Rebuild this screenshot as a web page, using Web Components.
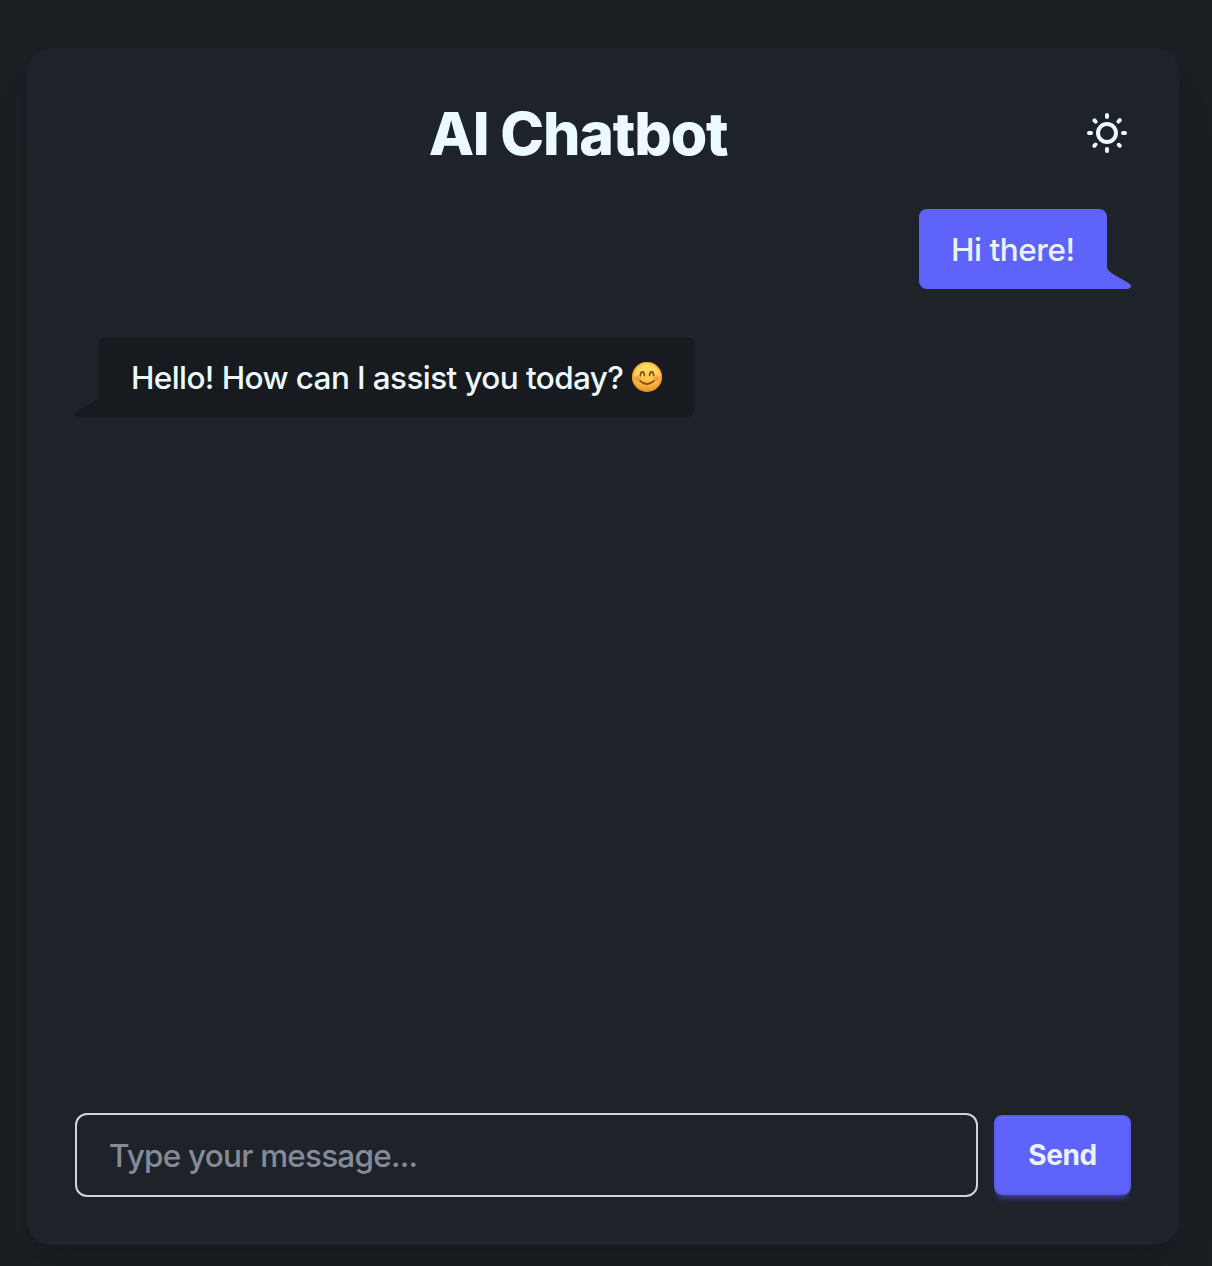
<!DOCTYPE html>
<html lang="en">
<head>
<meta charset="utf-8">
<title>AI Chatbot</title>
<style>
html{background:#1b1f23}
body{margin:0;height:1266px;overflow:hidden;font-family:Inter,"Liberation Sans",sans-serif;color:#ecf9ff;-webkit-font-smoothing:antialiased}
</style>
</head>
<body>
<chat-app>
  <chat-header slot="header">AI Chatbot</chat-header>
  <chat-bubble side="end">Hi there!</chat-bubble>
  <chat-bubble side="start">Hello! How can I assist you today? <smile-emoji></smile-emoji></chat-bubble>
  <chat-composer slot="composer" placeholder="Type your message..."></chat-composer>
</chat-app>
<script>
const define = (name, html, setup) => customElements.define(name, class extends HTMLElement {
  constructor() {
    super();
    this.attachShadow({ mode: 'open' }).innerHTML = html;
    if (setup) setup(this);
  }
});

define('chat-app', `
<style>
:host{display:block;box-sizing:border-box;height:1266px;padding:49px 33px 21px 27px}
.card{box-sizing:border-box;height:1196px;padding:48px;border-radius:24px;background:#1e232a;
  display:flex;flex-direction:column;box-shadow:0 40px 50px -10px #0000001a,0 16px 20px -12px #0000001a}
.log{flex:1;display:flex;flex-direction:column;gap:48px;padding-top:40px}
</style>
<div class="card"><slot name="header"></slot><div class="log"><slot></slot></div><slot name="composer"></slot></div>`);

define('chat-header', `
<style>
:host{display:flex;align-items:center;height:72px}
h1{flex:1;margin:0;padding-top:2px;text-align:center;font-size:59px;line-height:74px;font-weight:800;letter-spacing:-1.2px;text-indent:-2px}
svg{display:block;width:48px;height:48px;fill:currentColor}
</style>
<h1><slot></slot></h1>
<svg viewBox="0 0 24 24"><path d="M5.64,17l-.71.71a1,1,0,0,0,0,1.41,1,1,0,0,0,1.41,0l.71-.71A1,1,0,0,0,5.64,17ZM5,12a1,1,0,0,0-1-1H3a1,1,0,0,0,0,2H4A1,1,0,0,0,5,12Zm7-7a1,1,0,0,0,1-1V3a1,1,0,0,0-2,0V4A1,1,0,0,0,12,5ZM5.64,7.05a1,1,0,0,0,.7.29,1,1,0,0,0,.71-.29,1,1,0,0,0,0-1.41l-.71-.71A1,1,0,0,0,4.93,6.34Zm12,.29a1,1,0,0,0,.7-.29l.71-.71a1,1,0,1,0-1.41-1.41L17,5.64a1,1,0,0,0,0,1.41A1,1,0,0,0,17.66,7.34ZM21,11H20a1,1,0,0,0,0,2h1a1,1,0,0,0,0-2Zm-9,8a1,1,0,0,0-1,1v1a1,1,0,0,0,2,0V20A1,1,0,0,0,12,19ZM18.36,17A1,1,0,0,0,17,18.36l.71.71a1,1,0,0,0,1.41,0,1,1,0,0,0,0-1.41ZM12,6.5A5.5,5.5,0,1,0,17.5,12,5.51,5.51,0,0,0,12,6.5Zm0,9A3.5,3.5,0,1,1,15.5,12,3.5,3.5,0,0,1,12,15.5Z"/></svg>`);

define('chat-bubble', `
<style>
:host{display:flex;align-items:flex-end;--fill:#171a1e}
:host([side=end]){flex-direction:row-reverse;--fill:#5e63f9;color:#edf1fe}
.body{box-sizing:border-box;height:80px;width:596px;padding:0 32px;border-radius:8px 8px 8px 0;background:var(--fill);
  font-size:31.5px;font-weight:450;line-height:81px;white-space:nowrap;letter-spacing:-.6px}
:host([side=end]) .body{width:188px;border-radius:8px 8px 0 8px;letter-spacing:-.45px}
.tail{display:block;width:26px;height:26px;fill:var(--fill);margin-right:-2px}
:host([side=end]) .tail{transform:scaleX(-1);margin:0 0 0 -2px}
</style>
<svg class="tail" viewBox="0 0 13 13"><path d="M0 11.5004C0 13.0004 2 13.0004 2 13.0004H12H13V0.00036329L12.5 0C12.5 0 11.977 2.09572 11.8581 2.50033C11.6075 3.35237 10.9149 4.22374 9 5.50036C6 7.50036 0 10.0004 0 11.5004Z"/></svg>
<div class="body"><slot></slot></div>`);

define('smile-emoji', `
<style>
:host{display:inline-block;width:30px;height:30px;margin-left:1px;vertical-align:-3px}
svg{display:block}
</style>
<svg width="30" height="30" viewBox="0 0 30 30" role="img" aria-label="😊">
<defs>
<linearGradient id="face" x1="0" y1="0" x2="0" y2="1"><stop offset="0" stop-color="#ffe46a"/><stop offset=".55" stop-color="#fcc94a"/><stop offset="1" stop-color="#ed952b"/></linearGradient>
<radialGradient id="edge"><stop offset=".8" stop-color="#e88a20" stop-opacity="0"/><stop offset="1" stop-color="#e07d1d" stop-opacity=".65"/></radialGradient>
<radialGradient id="blush"><stop offset="0" stop-color="#f3603a" stop-opacity=".65"/><stop offset="1" stop-color="#f3603a" stop-opacity="0"/></radialGradient>
</defs>
<circle cx="15" cy="15" r="15" fill="url(#face)"/><circle cx="15" cy="15" r="15" fill="url(#edge)"/>
<ellipse cx="5.2" cy="16.5" rx="4.7" ry="4" fill="url(#blush)"/><ellipse cx="24.8" cy="16.5" rx="4.7" ry="4" fill="url(#blush)"/>
<g fill="none" stroke="#794b18" stroke-width="1.6" stroke-linecap="round"><path d="M8.3 13.6C8.7 8.6 12 8.6 12.5 13.6"/><path d="M17.5 13.6C18 8.6 21.3 8.6 21.7 13.6"/><path d="M8 18.9Q15 25.2 22 18.9"/></g>
</svg>`);

define('chat-composer', `
<style>
:host{display:flex;align-items:center;gap:16px;height:84px}
.field{box-sizing:border-box;width:903px;height:84px;padding:0 32px;border:2px solid #d1d5db;border-radius:12px;
  font-size:31.5px;font-weight:450;line-height:81px;color:#848b97;letter-spacing:-.8px;white-space:nowrap;box-shadow:0 2px 4px #0000000d}
button{box-sizing:border-box;width:137px;height:80px;margin:0;padding:0;border:2px solid #5a5be8;border-radius:8px;
  background:#5e63f9;color:#edf1fe;font:650 28px/76px Inter,"Liberation Sans",sans-serif;letter-spacing:-.4px;
  box-shadow:inset 0 2px 0 -1px #ffffff1a,0 6px 4px -4px #605dff4d,0 8px 6px -4px #605dff4d}
span{display:block;line-height:76px}
</style>
<div class="field" role="textbox"></div><button><span>Send</span></button>`, el => {
  el.shadowRoot.querySelector('.field').textContent = el.getAttribute('placeholder') || 'Type your message...';
});
</script>
</body>
</html>
